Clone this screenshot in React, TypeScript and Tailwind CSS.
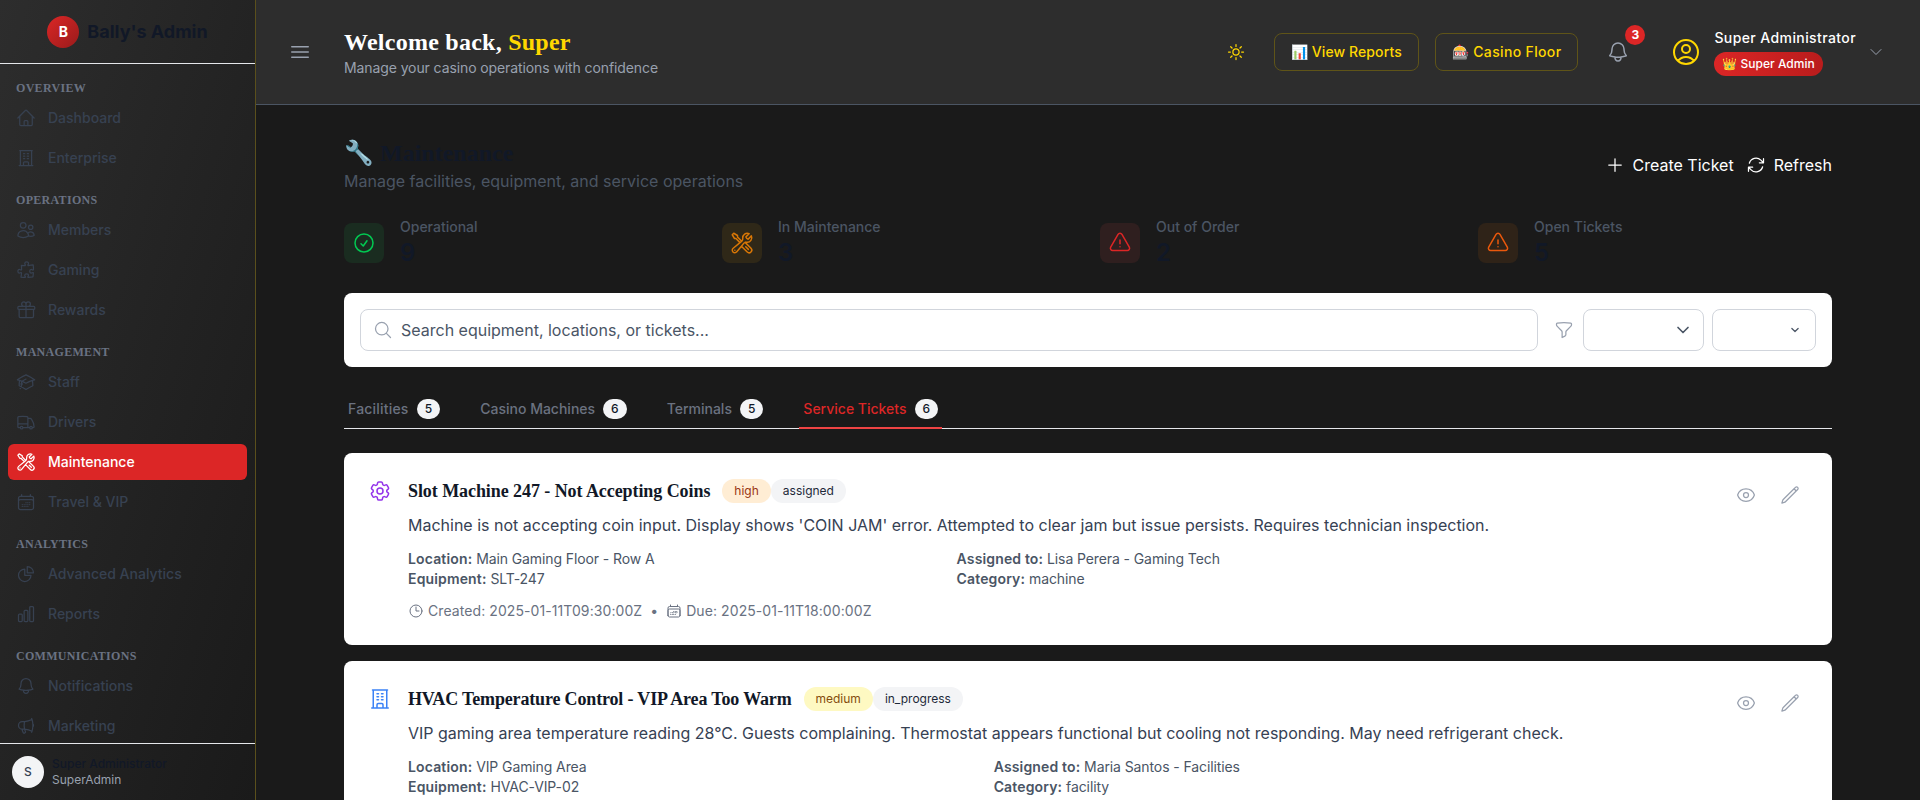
import React from 'react';
import {
  HiOutlineHome,
  HiOutlineBuildingOffice,
  HiOutlineUsers,
  HiOutlinePuzzlePiece,
  HiOutlineGift,
  HiOutlineAcademicCap,
  HiOutlineTruck,
  HiOutlineWrenchScrewdriver,
  HiOutlineCalendarDays,
  HiOutlineChartPie,
  HiOutlineChartBar,
  HiOutlineBell,
  HiOutlineMegaphone,
  HiOutlineBars3,
  HiOutlineSun,
  HiOutlineUserCircle,
  HiOutlineChevronDown,
  HiOutlinePlus,
  HiOutlineArrowPath,
  HiOutlineCheckCircle,
  HiOutlineExclamationTriangle,
  HiOutlineMagnifyingGlass,
  HiOutlineFunnel,
  HiOutlineCog6Tooth,
  HiOutlineEye,
  HiOutlinePencil,
  HiOutlineClock,
} from 'react-icons/hi2';

const serif = "font-['Liberation_Serif',serif]";

const navSections = [
  {
    title: 'Overview',
    items: [
      { label: 'Dashboard', icon: HiOutlineHome },
      { label: 'Enterprise', icon: HiOutlineBuildingOffice },
    ],
  },
  {
    title: 'Operations',
    items: [
      { label: 'Members', icon: HiOutlineUsers },
      { label: 'Gaming', icon: HiOutlinePuzzlePiece },
      { label: 'Rewards', icon: HiOutlineGift },
    ],
  },
  {
    title: 'Management',
    items: [
      { label: 'Staff', icon: HiOutlineAcademicCap },
      { label: 'Drivers', icon: HiOutlineTruck },
      { label: 'Maintenance', icon: HiOutlineWrenchScrewdriver, active: true },
      { label: 'Travel & VIP', icon: HiOutlineCalendarDays },
    ],
  },
  {
    title: 'Analytics',
    items: [
      { label: 'Advanced Analytics', icon: HiOutlineChartPie },
      { label: 'Reports', icon: HiOutlineChartBar },
    ],
  },
  {
    title: 'Communications',
    items: [
      { label: 'Notifications', icon: HiOutlineBell },
      { label: 'Marketing', icon: HiOutlineMegaphone },
    ],
  },
];

const stats = [
  { label: 'Operational', value: '9', icon: HiOutlineCheckCircle, tile: 'bg-[#1a2c20]', color: 'text-green-500' },
  { label: 'In Maintenance', value: '3', icon: HiOutlineWrenchScrewdriver, tile: 'bg-[#2f2818]', color: 'text-[#d97706]' },
  { label: 'Out of Order', value: '2', icon: HiOutlineExclamationTriangle, tile: 'bg-[#2f1f1f]', color: 'text-[#dc2626]' },
  { label: 'Open Tickets', value: '5', icon: HiOutlineExclamationTriangle, tile: 'bg-[#2f2318]', color: 'text-[#ea580c]' },
];

const tabs = [
  { label: 'Facilities', count: 5, spacing: 'tracking-[0.2px]' },
  { label: 'Casino Machines', count: 6, spacing: '' },
  { label: 'Terminals', count: 5, spacing: '' },
  { label: 'Service Tickets', count: 6, spacing: '', active: true },
];

const Sidebar = () => (
  <aside className="flex h-full w-64 shrink-0 flex-col border-r border-[#5a4f1c] bg-gradient-to-br from-[#2d2d2d] to-[#1a1a1a]">
    <div className="flex h-16 shrink-0 items-center justify-center gap-2 border-b border-gray-200">
      <div className="flex h-8 w-8 items-center justify-center rounded-full bg-gradient-to-br from-[#dc2626] to-[#991b1b] text-sm font-bold text-white">
        B
      </div>
      <span className="text-lg font-bold text-[#111827]">Bally's Admin</span>
    </div>
    <nav className="min-h-0 flex-1 overflow-hidden px-2 pt-4">
      {navSections.map(section => (
        <div key={section.title} className="mb-4">
          <h3 className={`mb-1 px-2 text-xs font-bold uppercase tracking-wide text-gray-500 ${serif}`}>{section.title}</h3>
          <div className="flex flex-col gap-1">
            {section.items.map(item => (
              <a
                key={item.label}
                className={`flex h-9 items-center gap-3 rounded-md px-2 text-sm font-medium ${
                  item.active ? 'bg-[#dc2626] text-white' : 'text-[#374151]'
                }`}
              >
                <item.icon className="h-5 w-5" />
                {item.label}
              </a>
            ))}
          </div>
        </div>
      ))}
    </nav>
    <div className="flex h-[57px] shrink-0 items-center gap-2 border-t border-gray-200 px-3">
      <div className="flex h-8 w-8 items-center justify-center rounded-full bg-gray-100 text-xs font-medium text-gray-700">S</div>
      <div className="text-xs leading-4">
        <p className="font-medium text-[#111827]">Super Administrator</p>
        <p className="text-gray-400">SuperAdmin</p>
      </div>
    </div>
  </aside>
);

const Header = () => (
  <header className="flex h-[105px] shrink-0 items-center justify-between border-b border-[#4b5563] bg-[#2d2d2d] px-6">
    <div className="flex items-center gap-6">
      <button className="p-2 text-gray-400">
        <HiOutlineBars3 className="h-6 w-6" />
      </button>
      <div>
        <h1 className={`text-2xl font-bold leading-8 tracking-[0.25px] text-white ${serif}`}>
          Welcome back, <span className="text-[#ffd700]">Super</span>
        </h1>
        <p className="text-sm tracking-[-0.1px] text-gray-400">Manage your casino operations with confidence</p>
      </div>
    </div>
    <div className="flex items-center gap-5">
      <button className="p-2 text-[#ffd700]">
        <HiOutlineSun className="h-5 w-5" />
      </button>
      <div className="flex items-center gap-4">
        <button className="h-[38px] rounded-lg border border-[#5f5418] px-4 text-sm font-medium tracking-[0.1px] text-[#ffd700]">📊 View Reports</button>
        <button className="h-[38px] rounded-lg border border-[#5f5418] px-4 text-sm font-medium tracking-[0.35px] text-[#ffd700]">🎰 Casino Floor</button>
      </div>
      <div className="relative p-2 text-gray-400">
        <HiOutlineBell className="h-6 w-6" />
        <span className="absolute right-[-7px] top-[-7px] flex h-5 w-5 items-center justify-center rounded-full bg-[#dc2626] text-xs font-bold text-white">3</span>
      </div>
      <div className="flex items-center gap-3 px-3">
        <HiOutlineUserCircle className="h-8 w-8 text-[#ffd700]" />
        <div>
          <p className="text-sm font-medium leading-5 tracking-[0.4px] text-white">Super Administrator</p>
          <span className="mt-1 inline-flex h-6 items-center rounded-full bg-gradient-to-r from-[#dc2626] to-[#b91c1c] px-2 text-xs font-medium text-white">👑 Super Admin</span>
        </div>
        <HiOutlineChevronDown className="h-4 w-4 text-gray-400" />
      </div>
    </div>
  </header>
);

const Ticket = ({
  icon: Icon,
  iconColor,
  title,
  titleSpacing,
  priority,
  priorityClass,
  status,
  description,
  location,
  equipment,
  assigned,
  category,
  created,
  due,
}: {
  icon: React.ComponentType<{ className?: string }>;
  iconColor: string;
  title: string;
  titleSpacing: string;
  priority: string;
  priorityClass: string;
  status: string;
  description: string;
  location: string;
  equipment: string;
  assigned: string;
  category: string;
  created?: string;
  due?: string;
}) => (
  <div className="flex items-start justify-between rounded-lg bg-white p-6">
    <div className="flex items-start gap-4">
      <Icon className={`mt-0.5 h-6 w-6 shrink-0 ${iconColor}`} />
      <div>
        <div className="mb-2 flex items-center">
          <h3 className={`mr-3 text-lg font-bold text-[#111827] ${titleSpacing} ${serif}`}>{title}</h3>
          <span className={`rounded-full px-3 py-1 text-xs ${priorityClass}`}>{priority}</span>
          <span className="rounded-full bg-gray-100 px-3 py-1 text-xs text-gray-800">{status}</span>
        </div>
        <p className="mb-3 text-base text-gray-700">{description}</p>
        <div className="grid grid-cols-2 gap-x-4 text-sm tracking-[-0.1px] text-gray-600">
          <p><span className="font-semibold tracking-[0.15px]">Location:</span> {location}</p>
          <p><span className="font-semibold tracking-[0.15px]">Assigned to:</span> {assigned}</p>
          <p><span className="font-semibold tracking-[0.15px]">Equipment:</span> {equipment}</p>
          <p><span className="font-semibold tracking-[0.15px]">Category:</span> {category}</p>
        </div>
        {created && (
          <div className="mt-3 flex items-center gap-2 text-sm tracking-[0.08px] text-gray-500">
            <span className="flex items-center gap-1">
              <HiOutlineClock className="h-4 w-4" />
              Created: {created}
            </span>
            <span>•</span>
            <span className="flex items-center gap-1">
              <HiOutlineCalendarDays className="h-4 w-4" />
              Due: {due}
            </span>
          </div>
        )}
      </div>
    </div>
    <div className="flex gap-2 text-gray-400">
      <button className="p-2"><HiOutlineEye className="h-5 w-5" /></button>
      <button className="p-2"><HiOutlinePencil className="h-5 w-5" /></button>
    </div>
  </div>
);

export default function App() {
  return (
    <div className="flex h-screen overflow-hidden bg-[#1a1a1a] font-[Inter,sans-serif]">
      <Sidebar />
      <div className="flex min-w-0 flex-1 flex-col">
        <Header />
        <main className="min-h-0 flex-1 overflow-hidden px-[88px] py-8">
          <div className="mb-6 flex items-center justify-between">
            <div>
              <h2 className={`text-2xl font-bold leading-8 text-[#111827] ${serif}`}>🔧 Maintenance</h2>
              <p className="text-base text-[#4b5563]">Manage facilities, equipment, and service operations</p>
            </div>
            <div className="flex items-center gap-3 text-base text-white">
              <button className="flex items-center gap-2">
                <HiOutlinePlus className="h-5 w-5" />
                Create Ticket
              </button>
              <button className="flex items-center gap-2">
                <HiOutlineArrowPath className="h-5 w-5" />
                Refresh
              </button>
            </div>
          </div>

          <div className="mb-6 grid grid-cols-4 gap-6">
            {stats.map(stat => (
              <div key={stat.label} className="flex items-center gap-4">
                <div className={`flex h-10 w-10 items-center justify-center rounded-lg ${stat.tile}`}>
                  <stat.icon className={`h-6 w-6 ${stat.color}`} />
                </div>
                <div>
                  <p className="text-sm font-medium text-[#4b5563]">{stat.label}</p>
                  <p className="text-2xl font-semibold leading-8 text-[#111827]">{stat.value}</p>
                </div>
              </div>
            ))}
          </div>

          <div className="mb-6 flex items-center rounded-lg bg-white p-4">
            <div className="flex h-[42px] flex-1 items-center gap-2 rounded-lg border border-gray-300 px-3">
              <HiOutlineMagnifyingGlass className="h-5 w-5 text-gray-400" />
              <input
                className="flex-1 text-base outline-none placeholder:text-gray-600"
                placeholder="Search equipment, locations, or tickets..."
              />
            </div>
            <HiOutlineFunnel className="ml-4 mr-[9px] h-5 w-5 text-gray-400" />
            <div className="flex h-[42px] w-[121px] items-center justify-end rounded-lg border border-gray-300 pr-3">
              <HiOutlineChevronDown className="h-4 w-4 stroke-[2.5] text-gray-600" />
            </div>
            <div className="ml-2 flex h-[42px] w-[104px] items-center justify-end rounded-lg border border-gray-300 pr-[15px]">
              <HiOutlineChevronDown className="h-2.5 w-2.5 stroke-[3] text-gray-600" />
            </div>
          </div>

          <div className="mb-6 flex gap-8 border-b border-gray-200">
            {tabs.map(tab => (
              <button
                key={tab.label}
                className={`-mb-px flex items-center border-b-2 px-1 py-2 text-sm font-medium ${tab.spacing} ${
                  tab.active ? 'border-[#ef4444] text-[#dc2626]' : 'border-transparent text-[#6b7280]'
                }`}
              >
                {tab.label}
                <span className="ml-2 flex h-5 items-center rounded-full bg-gray-100 px-2 text-xs text-gray-900">{tab.count}</span>
              </button>
            ))}
          </div>

          <div className="flex flex-col gap-4">
            <Ticket
              icon={HiOutlineCog6Tooth}
              iconColor="text-[#9333ea]"
              title="Slot Machine 247 - Not Accepting Coins"
              titleSpacing="tracking-[-0.07px]"
              priority="high"
              priorityClass="bg-orange-100 text-[#9a3412]"
              status="assigned"
              description="Machine is not accepting coin input. Display shows 'COIN JAM' error. Attempted to clear jam but issue persists. Requires technician inspection."
              location="Main Gaming Floor - Row A"
              equipment="SLT-247"
              assigned="Lisa Perera - Gaming Tech"
              category="machine"
              created="2025-01-11T09:30:00Z"
              due="2025-01-11T18:00:00Z"
            />
            <Ticket
              icon={HiOutlineBuildingOffice}
              iconColor="text-[#3b82f6]"
              title="HVAC Temperature Control - VIP Area Too Warm"
              titleSpacing="tracking-[-0.16px]"
              priority="medium"
              priorityClass="bg-yellow-100 text-[#854d0e]"
              status="in_progress"
              description="VIP gaming area temperature reading 28°C. Guests complaining. Thermostat appears functional but cooling not responding. May need refrigerant check."
              location="VIP Gaming Area"
              equipment="HVAC-VIP-02"
              assigned="Maria Santos - Facilities"
              category="facility"
            />
          </div>
        </main>
      </div>
    </div>
  );
}
